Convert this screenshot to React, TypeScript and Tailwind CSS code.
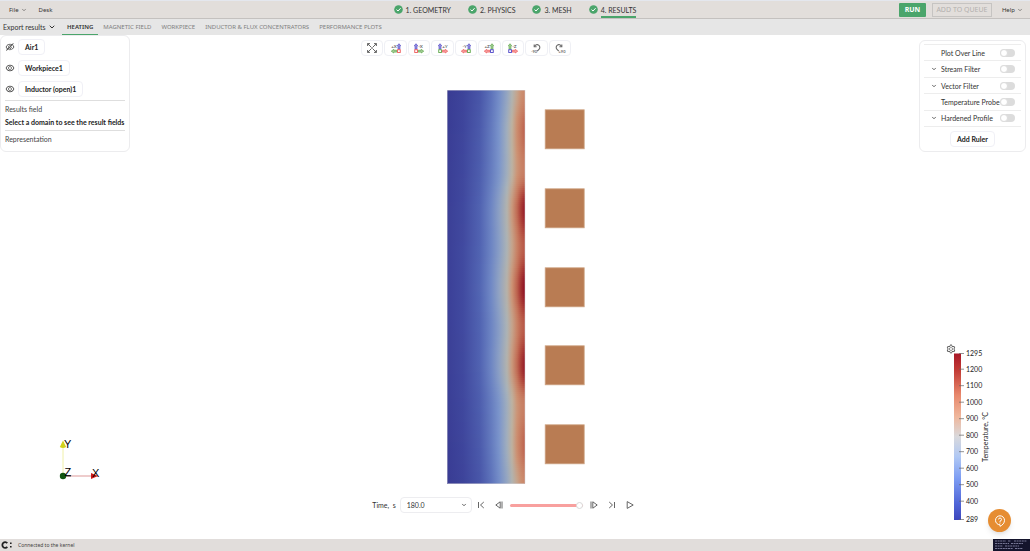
import { useState } from "react";
import type { ReactNode } from "react";
import { FiChevronDown } from "react-icons/fi";
import { AiOutlineEye, AiOutlineEyeInvisible, AiOutlineSetting } from "react-icons/ai";

const steps = ["1. GEOMETRY", "2. PHYSICS", "3. MESH", "4. RESULTS"];

const tabs = [
  "HEATING",
  "MAGNETIC FIELD",
  "WORKPIECE",
  "INDUCTOR & FLUX CONCENTRATORS",
  "PERFORMANCE PLOTS",
];

const domains = [
  { name: "Air1", visible: false },
  { name: "Workpiece1", visible: true },
  { name: "Inductor (open)1", visible: true },
];

const filters = [
  { name: "Plot Over Line", expandable: false },
  { name: "Stream Filter", expandable: true },
  { name: "Vector Filter", expandable: true },
  { name: "Temperature Probe", expandable: false },
  { name: "Hardened Profile", expandable: true },
];

const RED = "#ee5a5a";
const GREEN = "#5fa84a";
const BLUE = "#5048c8";

const views = [
  { label: "+X", up: BLUE, side: GREEN, box: RED, flip: true },
  { label: "-X", up: BLUE, side: GREEN, box: RED, flip: false },
  { label: "+Y", up: BLUE, side: RED, box: GREEN, flip: false },
  { label: "-Y", up: BLUE, side: RED, box: GREEN, flip: true },
  { label: "+Z", up: GREEN, side: RED, box: BLUE, flip: true },
  { label: "-Z", up: GREEN, side: RED, box: BLUE, flip: false },
];

// colour scale of the temperature field, 0 = coldest, 1 = hottest
const scale: [number, number[]][] = [
  [0, [56, 58, 146]],
  [0.12, [65, 74, 160]],
  [0.25, [84, 104, 181]],
  [0.4, [122, 148, 203]],
  [0.5, [168, 179, 186]],
  [0.56, [190, 178, 160]],
  [0.65, [205, 146, 115]],
  [0.75, [197, 118, 92]],
  [0.86, [178, 73, 60]],
  [1, [140, 12, 32]],
];

const depth = [0, 16, 33, 44, 52, 60, 65, 70, 74, 78];
const coolProfile = [0.01, 0.07, 0.17, 0.28, 0.37, 0.45, 0.51, 0.58, 0.63, 0.66];
const hotProfile = [0.04, 0.12, 0.24, 0.36, 0.45, 0.54, 0.65, 0.8, 0.92, 1];

const coilRows = [39, 118, 197, 275, 354];
const surfacePoints: [number, number][] = [
  [0, 0.1],
  [39, 0.42],
  [79, 0.2],
  [118, 0.92],
  [157, 0.5],
  [197, 1],
  [236, 0.5],
  [275, 0.92],
  [315, 0.2],
  [354, 0.42],
  [394, 0.1],
];

const colorAt = (t: number) => {
  const i = Math.max(1, scale.findIndex(([stop]) => stop >= t));
  const [a, from] = scale[i - 1];
  const [b, to] = scale[i];
  const k = (t - a) / (b - a);
  return `rgb(${from.map((c, n) => Math.round(c + (to[n] - c) * k)).join(",")})`;
};

const surfaceAt = (y: number) => {
  const i = Math.max(1, surfacePoints.findIndex(([p]) => p >= y));
  const [a, from] = surfacePoints[i - 1];
  const [b, to] = surfacePoints[i];
  const k = (1 - Math.cos((Math.PI * (y - a)) / (b - a))) / 2;
  return from + (to - from) * k;
};

const rows = Array.from({ length: 197 }, (_, i) => {
  const y = i * 2;
  const surface = surfaceAt(y);
  const core = Math.sin((Math.PI * y) / 394);
  return depth.map((x, n) => {
    const w = x / 78;
    const k = surface * w * w + core * (1 - w * w);
    return { x, color: colorAt(coolProfile[n] + (hotProfile[n] - coolProfile[n]) * k) };
  });
});

function Field() {
  return (
    <svg width="138" height="394" viewBox="0 0 138 394">
      {rows.map((stops, i) => (
        <g key={i}>
          <linearGradient id={`row${i}`}>
            {stops.map((s) => (
              <stop key={s.x} offset={s.x / 78} stopColor={s.color} />
            ))}
          </linearGradient>
          <rect
            x="0"
            y={i * 2}
            width="78"
            height="2"
            fill={`url(#row${i})`}
            shapeRendering="crispEdges"
          />
        </g>
      ))}
      <rect x="0.2" y="0.2" width="77.8" height="393.2" fill="none" stroke="#d5d3d8" strokeWidth="0.5" />
      {coilRows.map((y) => (
        <rect
          key={y}
          x="98.2"
          y={y - 19.2}
          width="39"
          height="39"
          fill="#b97c53"
          stroke="#cda384"
          strokeWidth="0.8"
        />
      ))}
    </svg>
  );
}

function CheckMark() {
  return (
    <svg viewBox="0 0 9 9" className="size-[9px]">
      <circle cx="4.5" cy="4.5" r="4.3" fill="#4ba56b" />
      <path d="M2.5 4.6 L4 6 L6.6 3.2" fill="none" stroke="#fff" strokeWidth="1" />
    </svg>
  );
}

function ViewIcon({ view }: { view: (typeof views)[number] }) {
  return (
    <svg viewBox="0 0 11 11" className="size-[10px] shrink-0 overflow-visible">
      <g transform={view.flip ? "translate(11 0) scale(-1 1)" : undefined} strokeWidth="0.8">
        <path d="M1.2 6.8V3H0.4L2.2 0.8L4 3H3.2V6.8Z" fill={view.up} fillOpacity="0.55" stroke={view.up} />
        <path d="M4.6 8H8V7L10.7 9L8 11V10H4.6Z" fill={view.side} fillOpacity="0.55" stroke={view.side} />
        <rect x="0.8" y="7.4" width="3" height="3" fill="#fff" stroke={view.box} strokeWidth="1" />
      </g>
      <text
        x={view.flip ? 6.4 : 4.6}
        y="5"
        fontSize="5"
        fontWeight="700"
        fill="#666"
        textAnchor={view.flip ? "end" : "start"}
      >
        {view.label}
      </text>
    </svg>
  );
}

function FitIcon() {
  return (
    <svg viewBox="0 0 10 10" className="size-[10px]" fill="none" stroke="#555" strokeWidth="0.9">
      <path d="M0.6 0.6L4 4M9.4 0.6L6 4M0.6 9.4L4 6M9.4 9.4L6 6" />
      <path d="M0.6 3V0.6H3M7 0.6H9.4V3M9.4 7V9.4H7M3 9.4H0.6V7" />
      <path d="M4 4L6 6M6 4L4 6" strokeWidth="0.5" />
    </svg>
  );
}

// the arc starts at the left end, runs over the top and tails off to the bottom
function RotateIcon({ flip }: { flip: boolean }) {
  return (
    <svg viewBox="0 0 11 11" className="size-[11px] overflow-visible" fill="none" stroke="#666" strokeWidth="1.1">
      <g transform={flip ? "translate(11 0) scale(-1 1)" : undefined}>
        <path d="M3.6 3.4A2.7 2.7 0 1 1 8 6.3L6.2 8.2" />
        <path d="M3.2 1.4V3.8H5.6" />
      </g>
      <text x={flip ? 4.5 : 0} y="10.4" fontSize="4" fontWeight="700" fill="#777" stroke="none">
        {flip ? "+90" : "-90"}
      </text>
    </svg>
  );
}

function ToolButton({ label, children }: { label: string; children: ReactNode }) {
  return (
    <button
      aria-label={label}
      className="flex h-4 flex-1 items-center justify-center rounded-sm border border-[#eff0f5] bg-white"
    >
      {children}
    </button>
  );
}

function PlayerButton({ label, path }: { label: string; path: string }) {
  return (
    <button aria-label={label} className="flex w-[18px] justify-center">
      <svg viewBox="0 0 8 8" className="size-[8px] overflow-visible" fill="none" stroke="#555" strokeWidth="0.9">
        <path d={path} />
      </svg>
    </button>
  );
}

function Axes() {
  return (
    <svg viewBox="0 0 60 60" className="mb-[49px] ml-[50px] size-[60px] font-['Liberation_Sans',sans-serif]" fontSize="11">
      <line x1="13" y1="45" x2="13" y2="16" stroke="#f0f0a8" strokeWidth="1" />
      <line x1="13" y1="46" x2="42" y2="46" stroke="#d99" strokeWidth="1" />
      <line x1="15" y1="46" x2="21" y2="46" stroke="#544" strokeWidth="1" />
      <path d="M13 10.5L16.2 17Q13 19 9.8 17Z" fill="#d2d21c" />
      <path d="M48 46L41 43V49Z" fill="#cc1a1a" />
      <circle cx="13" cy="46" r="3.2" fill="#115511" />
      <g fill="#000">
        <text x="14" y="18">Y</text>
        <text x="14.5" y="45.5">Z</text>
        <text x="42" y="46.5">X</text>
      </g>
    </svg>
  );
}

const ticks = [1295, 1200, 1100, 1000, 900, 800, 700, 600, 500, 400, 289];

function Legend() {
  return (
    <div className="relative mb-[13px] ml-[27px] w-[52px]">
      <button aria-label="Legend settings" className="absolute top-0 left-0 text-[#444]">
        <AiOutlineSetting size={10} />
      </button>
      <svg viewBox="0 0 52 182" className="h-[182px] w-full overflow-visible font-[Lato,sans-serif]" fill="#222">
        <linearGradient id="legend" x2="0" y2="1">
          <stop offset="0" stopColor="#a81828" />
          <stop offset="0.1" stopColor="#c23b35" />
          <stop offset="0.25" stopColor="#e8886c" />
          <stop offset="0.38" stopColor="#efb79c" />
          <stop offset="0.5" stopColor="#d9d9dc" />
          <stop offset="0.62" stopColor="#b0c8f4" />
          <stop offset="0.75" stopColor="#7d9df3" />
          <stop offset="0.9" stopColor="#5066d8" />
          <stop offset="1" stopColor="#3d46bc" />
        </linearGradient>
        <rect x="8" y="9.5" width="7" height="166.5" fill="url(#legend)" />
        {ticks.map((t) => {
          const y = 9.5 + ((1295 - t) / 1006) * 166;
          return (
            <g key={t}>
              <line x1="13" x2="18" y1={y} y2={y} stroke="#666" strokeWidth="0.7" />
              <text x="20" y={y + 2.4} fontSize="7">
                {t}
              </text>
            </g>
          );
        })}
        <text transform="translate(41.5 93) rotate(-90)" textAnchor="middle" fontSize="7">
          Temperature, °C
        </text>
      </svg>
    </div>
  );
}

export default function App() {
  const [activeTab, setActiveTab] = useState("HEATING");
  const [time, setTime] = useState(180);

  return (
    <div className="flex h-screen min-h-[500px] flex-col bg-white font-[Lato,sans-serif] text-[7px] leading-[10px] whitespace-nowrap text-[#333]">
      <header className="flex h-[19px] items-center justify-between border-t border-b border-t-[#e4e7ee] border-b-[#c4c1bf] bg-[#e2dedb]">
        <div className="flex w-[390px] gap-3 pl-[9px] font-['Noto_Sans',sans-serif] text-[6px]">
          <button className="flex items-center gap-0.5">
            File <FiChevronDown size={6} />
          </button>
          <button>Desk</button>
        </div>
        <nav className="flex h-full gap-[17px]">
          {steps.map((step, i) => (
            <a key={step} href="#" className="flex items-center gap-[3px]">
              <CheckMark />
              <span
                className={`flex h-full items-center border-b-2 pt-0.5 ${
                  i === 3 ? "border-[#4ba56b]" : "border-transparent"
                }`}
              >
                {step}
              </span>
            </a>
          ))}
        </nav>
        <div className="flex w-[390px] items-center justify-end pr-[7px] font-['Noto_Sans',sans-serif]">
          <button className="h-[14px] w-[27px] rounded-[1px] bg-[#4ba56b] font-bold text-white">RUN</button>
          <button className="ml-1.5 h-[14px] w-[60px] border border-[#c6c4c2] text-[#b3b0ae]">ADD TO QUEUE</button>
          <button className="ml-2.5 flex items-center gap-0.5 text-[6px]">
            Help <FiChevronDown size={6} />
          </button>
        </div>
      </header>

      <nav className="flex h-4 items-stretch bg-[#e6e6e6] pl-[3px]">
        <button className="mr-1.5 flex w-[53px] items-center justify-between">
          Export results <FiChevronDown size={8} strokeWidth={3} />
        </button>
        {tabs.map((tab) => (
          <button
            key={tab}
            onClick={() => setActiveTab(tab)}
            className={`border-b px-[5px] font-['Noto_Sans',sans-serif] text-[6px] ${
              activeTab === tab ? "border-[#4ba56b] font-semibold text-[#333]" : "border-transparent text-[#808080]"
            }`}
          >
            {tab}
          </button>
        ))}
      </nav>

      <main className="relative flex flex-1">
        <aside className="flex w-[130px] flex-col justify-between">
          <section className="h-[117px] rounded-md border border-[#ececee] px-1 pt-[3px]">
            <ul className="flex flex-col gap-[5px]">
              {domains.map((d) => (
                <li key={d.name} className="flex items-center gap-[3px]">
                  <button aria-label={`Show ${d.name}`}>
                    {d.visible ? <AiOutlineEye size={10} /> : <AiOutlineEyeInvisible size={10} />}
                  </button>
                  <button className="h-4 rounded-sm border border-[#f0f0f6] px-1.5 font-bold text-[#222]">
                    {d.name}
                  </button>
                </li>
              ))}
            </ul>
            <div className="mt-[3px] border-t border-[#dedede] pt-[3px] text-[#444]">Results field</div>
            <div className="mt-[3px] border-b border-[#dedede] pb-[3px] font-bold text-[#222]">
              Select a domain to see the result fields
            </div>
            <div className="mt-[3px] text-[#444]">Representation</div>
          </section>
          <Axes />
        </aside>

        <div className="flex flex-1 flex-col items-center">
          <div className="mt-[5px] pr-[117px]">
            <div className="flex w-[210px] gap-px">
              <ToolButton label="Fit view">
                <FitIcon />
              </ToolButton>
              {views.map((v) => (
                <ToolButton key={v.label} label={`View ${v.label}`}>
                  <ViewIcon view={v} />
                </ToolButton>
              ))}
              <ToolButton label="Rotate -90">
                <RotateIcon flip={false} />
              </ToolButton>
              <ToolButton label="Rotate +90">
                <RotateIcon flip />
              </ToolButton>
            </div>
          </div>

          <div className="mt-[34px] pr-[18px]">
            <Field />
          </div>

          <div className="mt-[13px] flex items-center pr-[38px]">
            <label htmlFor="time">Time,&nbsp; s</label>
            <div className="relative ml-1">
              <select
                id="time"
                className="block h-4 w-[72px] appearance-none rounded-sm border border-[#ededf0] bg-white px-1.5"
              >
                <option>180.0</option>
              </select>
              <FiChevronDown size={6} strokeWidth={3} className="pointer-events-none absolute top-[5px] right-[5px]" />
            </div>
            <div className="flex">
              <PlayerButton label="First frame" path="M1.5 1V7M6.8 1L3.5 4L6.8 7" />
              <PlayerButton label="Previous frame" path="M5.2 0.8L0.8 4L5.2 7.2ZM7 0.5V7.5" />
            </div>
            <input
              type="range"
              aria-label="Time step"
              min={0}
              max={180}
              value={time}
              onChange={(e) => setTime(Number(e.target.value))}
              className="mx-0.5 h-[3px] w-[73px] appearance-none rounded-full bg-[#f8a09e] [&::-webkit-slider-thumb]:size-[7px] [&::-webkit-slider-thumb]:appearance-none [&::-webkit-slider-thumb]:rounded-full [&::-webkit-slider-thumb]:border [&::-webkit-slider-thumb]:border-[#d8d8d8] [&::-webkit-slider-thumb]:bg-white"
            />
            <div className="flex">
              <PlayerButton label="Next frame" path="M2.8 0.8L7.2 4L2.8 7.2ZM1 0.5V7.5" />
              <PlayerButton label="Last frame" path="M6.5 1V7M1.2 1L4.5 4L1.2 7" />
              <PlayerButton label="Play" path="M1.2 0.6L7.2 4L1.2 7.4Z" />
            </div>
          </div>
        </div>

        <aside className="flex w-[111px] flex-col justify-between">
          <section className="mt-[5px] mr-1 flex h-[112px] flex-col items-center rounded-md border border-[#ececee] px-1 pt-[3px]">
            <ul className="flex h-[83px] w-full flex-col divide-y divide-[#ededed] border-y border-[#ededed]">
              {filters.map((f) => (
                <li key={f.name} className="flex flex-1 items-center pl-[7px]">
                  <span className="w-[10px]">{f.expandable && <FiChevronDown size={6} strokeWidth={3} />}</span>
                  <label className="flex flex-1 items-center justify-between">
                    {f.name}
                    <input
                      type="checkbox"
                      role="switch"
                      className="mr-1.5 h-2 w-[15px] appearance-none rounded-full bg-[#dcdcdc] before:block before:size-2 before:rounded-full before:border before:border-[#dcdcdc] before:bg-white checked:bg-[#4ba56b] checked:before:translate-x-[7px]"
                    />
                  </label>
                </li>
              ))}
            </ul>
            <button className="mt-1 h-4 w-[45px] rounded-sm border border-[#f0f0f6] font-bold text-[#222]">
              Add Ruler
            </button>
          </section>
          <Legend />
        </aside>

        <button
          aria-label="Help"
          className="absolute right-[19px] bottom-[7px] flex size-[23px] items-center justify-center rounded-full bg-[#e68d32] shadow-md"
        >
          <svg viewBox="0 0 12 12" className="size-[12px]" fill="none" stroke="#fff" strokeWidth="1">
            <path d="M6 11.3V9.8A4.5 4.5 0 1 1 10.5 5.3C10.5 8 8.5 10.2 6 11.3Z" strokeLinejoin="round" />
            <path d="M4.5 4.4A1.5 1.5 0 1 1 6 6V6.8M6 7.6V8.5" />
          </svg>
        </button>
      </main>

      <footer className="flex h-3 items-center justify-between bg-[#e1dddb] pl-px font-['Noto_Sans',sans-serif] text-[5px]">
        <div className="flex items-center gap-[5px]">
          <svg viewBox="0 0 12 8" className="h-2 w-3">
            <path d="M6.3 2.2A2.8 2.8 0 1 0 6.3 5.8" fill="none" stroke="#222" strokeWidth="1.8" />
            <path d="M9 1.4H10.6V3H9ZM9 5H10.6V6.6H9Z" fill="#222" />
          </svg>
          <span className="text-[#444]">Connected to the kernel</span>
        </div>
        <svg viewBox="0 0 37 12" className="h-3 w-[37px] bg-[#14142c]" stroke="#8f8fb0" strokeWidth="0.8">
          <path d="M2 2H13M15 2H18M21 2H34M2 4.5H16M18 4.5H30M2 7H10M12 7H26M2 9.5H20M22 9.5H30" strokeDasharray="2 0.6" />
        </svg>
      </footer>
    </div>
  );
}
